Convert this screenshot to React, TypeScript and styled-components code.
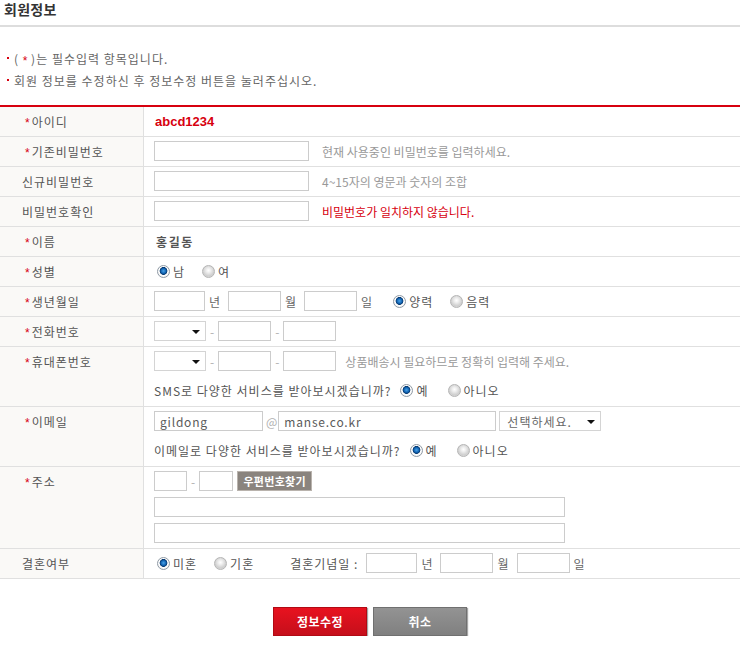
import styled, { createGlobalStyle } from 'styled-components';

const GlobalStyle = createGlobalStyle`
  body {
    margin: 0;
    background: #ffffff;
    font-family: 'Noto Sans CJK KR', 'Noto Sans', sans-serif;
    font-size: 12px;
    letter-spacing: 1px;
    color: #555555;
  }
`;

const Page = styled.div`
  width: 740px;
`;

const Title = styled.h2`
  margin: 0;
  height: 25px;
  padding-left: 4px;
  font-size: 14px;
  font-weight: 700;
  line-height: 18px;
  letter-spacing: 0.3px;
  color: #333333;
  border-bottom: 2px solid #dddddd;
`;

const Notes = styled.ul`
  margin: 0;
  padding: 20px 0 14px 0;
  list-style: none;
  border-bottom: 2px solid #d7000f;
`;

const Note = styled.li`
  display: flex;
  align-items: center;
  height: 22px;
  color: #666666;
  white-space: pre;

  &::before {
    content: '';
    width: 2px;
    height: 2px;
    margin: 0 5px 0 7px;
    background: #d7000f;
  }
`;

const Star = styled.span`
  display: inline-block;
  color: #d7000f;
  font-family: 'Liberation Sans', sans-serif;
  font-size: 12px;
  line-height: 0;
  letter-spacing: 0;
  position: relative;
  top: 3px;
`;

const Row = styled.div`
  display: flex;
  border-bottom: 1px solid #e0e0e0;
`;

const Label = styled.div<{ $star?: boolean }>`
  flex: none;
  display: flex;
  align-items: flex-start;
  box-sizing: border-box;
  width: 144px;
  padding-left: ${(p) => (p.$star ? '25px' : '22px')};
  line-height: 29px;
  background: #faf9f7;
  border-right: 1px solid #e0e0e0;
  color: #555555;

  & > ${Star} {
    line-height: 29px;
    top: 2px;
    margin-right: 2px;
  }
`;

const Value = styled.div`
  flex: 1;
  display: flex;
  flex-direction: column;
  gap: 6px;
  padding: 4px 10px 5px 10px;
`;

const Line = styled.div`
  display: flex;
  align-items: center;
  height: 20px;
  white-space: nowrap;
`;

const SubLine = styled(Line)`
  height: 22px;
  margin-top: 2px;
`;

const Input = styled.input<{ $w: number }>`
  box-sizing: border-box;
  width: ${(p) => p.$w}px;
  height: 20px;
  margin: 0;
  padding: 0 5px;
  border: 1px solid #cccccc;
  background: #ffffff;
  font-family: 'Noto Sans CJK KR', 'Noto Sans', sans-serif;
  font-size: 12px;
  letter-spacing: 0.8px;
  color: #5a5a5a;
  outline: none;
`;

const Select = styled.div<{ $w: number }>`
  box-sizing: border-box;
  display: flex;
  align-items: center;
  width: ${(p) => p.$w}px;
  height: 20px;
  padding: 0 5px 0 7px;
  border: 1px solid #d4d4d4;
  background: #ffffff;
  color: #666666;

  &::after {
    content: '';
    margin-left: auto;
    border-left: 4px solid transparent;
    border-right: 4px solid transparent;
    border-top: 4px solid #111111;
    margin-top: 1px;
  }
`;

const Sep = styled.span<{ $l?: number; $r?: number }>`
  margin: 0 ${(p) => p.$r ?? 4}px 0 ${(p) => p.$l ?? 4}px;
  letter-spacing: 0;
  color: #b0b0b0;
`;

const Unit = styled.span`
  margin: 0 7px 0 4px;
  color: #666666;
`;

const Hint = styled.span<{ $error?: boolean }>`
  margin-left: 13px;
  letter-spacing: 0;
  color: ${(p) => (p.$error ? '#d7000f' : '#999999')};
`;

const UserId = styled.span`
  margin-left: 1px;
  font-family: 'Liberation Sans', sans-serif;
  font-size: 13px;
  font-weight: 700;
  letter-spacing: 0;
  color: #d7000f;
`;

const Name = styled.span`
  margin-left: 2px;
  font-weight: 700;
  letter-spacing: 1.6px;
  color: #555555;
`;

const RadioItem = styled.label<{ $ml?: number; $mr?: number }>`
  display: inline-flex;
  align-items: center;
  margin-left: ${(p) => p.$ml ?? 0}px;
  margin-right: ${(p) => p.$mr ?? 14}px;
  color: #555555;
`;

const Dot = styled.span<{ $on?: boolean }>`
  box-sizing: border-box;
  width: 13px;
  height: 13px;
  margin: 0 3px;
  border-radius: 50%;
  border: 1px solid ${(p) => (p.$on ? '#8f9aa5' : '#b5b5b5')};
  background: ${(p) =>
    p.$on
      ? 'radial-gradient(circle at 50% 45%, #4aa3e8 0, #1265b4 2.4px, #07386e 3.6px, #ffffff 4.2px, #e6e6e6 100%)'
      : 'radial-gradient(circle at 50% 40%, #ffffff 0, #f0f0f0 2px, #cfcfcf 5.5px, #e8e8e8 100%)'};
`;

const Question = styled.span`
  margin-right: 6px;
`;

const ZipButton = styled.button`
  box-sizing: border-box;
  height: 20px;
  width: 75px;
  margin-left: 4px;
  padding: 0;
  border: 1px solid #b9b3ad;
  background: #8a847e;
  color: #ffffff;
  font-family: 'Noto Sans CJK KR', sans-serif;
  font-size: 11px;
  font-weight: 700;
  letter-spacing: 0.3px;
`;

const Anniversary = styled.span`
  margin: 0 8px 0 22px;
`;

const Buttons = styled.div`
  display: flex;
  justify-content: center;
  gap: 6px;
  padding-top: 28px;
`;

const Action = styled.button<{ $primary?: boolean }>`
  box-sizing: border-box;
  width: 94px;
  height: 29px;
  padding: 0;
  border: 1px solid ${(p) => (p.$primary ? '#b10a14' : '#707070')};
  background: ${(p) =>
    p.$primary
      ? 'linear-gradient(#e8121f, #c50f1b)'
      : 'linear-gradient(#939393, #808080)'};
  box-shadow: 1px 1px 1px rgba(0, 0, 0, 0.35);
  color: #ffffff;
  font-family: 'Noto Sans CJK KR', sans-serif;
  font-size: 12px;
  font-weight: 700;
  letter-spacing: 0.5px;
`;

type Opt = { text: string; on?: boolean };

function Radios({ items, first = 0, space }: { items: Opt[]; first?: number; space?: number }) {
  return (
    <>
      {items.map((item, i) => (
        <RadioItem key={item.text} $ml={i === 0 ? first : 0} $mr={space}>
          <Dot $on={item.on} />
          {item.text}
        </RadioItem>
      ))}
    </>
  );
}

function Req() {
  return <Star>*</Star>;
}

function App() {
  return (
    <Page>
      <GlobalStyle />
      <Title>회원정보</Title>
      <Notes>
        <Note>
          {'( '}
          <Star>*</Star>
          {' )는 필수입력 항목입니다.'}
        </Note>
        <Note>회원 정보를 수정하신 후 정보수정 버튼을 눌러주십시오.</Note>
      </Notes>

      <Row>
        <Label $star>
          <Req />
          아이디
        </Label>
        <Value>
          <Line>
            <UserId>abcd1234</UserId>
          </Line>
        </Value>
      </Row>
      <Row>
        <Label $star>
          <Req />
          기존비밀번호
        </Label>
        <Value>
          <Line>
            <Input type="password" $w={155} />
            <Hint>현재 사용중인 비밀번호를 입력하세요.</Hint>
          </Line>
        </Value>
      </Row>
      <Row>
        <Label>신규비밀번호</Label>
        <Value>
          <Line>
            <Input type="password" $w={155} />
            <Hint>4~15자의 영문과 숫자의 조합</Hint>
          </Line>
        </Value>
      </Row>
      <Row>
        <Label>비밀번호확인</Label>
        <Value>
          <Line>
            <Input type="password" $w={155} />
            <Hint $error>비밀번호가 일치하지 않습니다.</Hint>
          </Line>
        </Value>
      </Row>
      <Row>
        <Label $star>
          <Req />
          이름
        </Label>
        <Value>
          <Line>
            <Name>홍길동</Name>
          </Line>
        </Value>
      </Row>
      <Row>
        <Label $star>
          <Req />
          성별
        </Label>
        <Value>
          <Line>
            <Radios items={[{ text: '남', on: true }, { text: '여' }]} />
          </Line>
        </Value>
      </Row>
      <Row>
        <Label $star>
          <Req />
          생년월일
        </Label>
        <Value>
          <Line>
            <Input $w={51} />
            <Unit>년</Unit>
            <Input $w={53} />
            <Unit>월</Unit>
            <Input $w={53} />
            <Unit>일</Unit>
            <Radios first={10} items={[{ text: '양력', on: true }, { text: '음력' }]} />
          </Line>
        </Value>
      </Row>
      <Row>
        <Label $star>
          <Req />
          전화번호
        </Label>
        <Value>
          <Line>
            <Select $w={52} />
            <Sep>-</Sep>
            <Input $w={53} />
            <Sep>-</Sep>
            <Input $w={53} />
          </Line>
        </Value>
      </Row>
      <Row>
        <Label $star>
          <Req />
          휴대폰번호
        </Label>
        <Value>
          <Line>
            <Select $w={52} />
            <Sep>-</Sep>
            <Input $w={53} />
            <Sep>-</Sep>
            <Input $w={53} />
            <Hint style={{ marginLeft: 9 }}>상품배송시 필요하므로 정확히 입력해 주세요.</Hint>
          </Line>
          <SubLine>
            <Question>SMS로 다양한 서비스를 받아보시겠습니까?</Question>
            <Radios space={16} items={[{ text: '예', on: true }, { text: '아니오' }]} />
          </SubLine>
        </Value>
      </Row>
      <Row>
        <Label $star>
          <Req />
          이메일
        </Label>
        <Value>
          <Line>
            <Input $w={109} defaultValue="gildong" />
            <Sep $l={3} $r={1}>@</Sep>
            <Input $w={218} defaultValue="manse.co.kr" />
            <Select $w={102} style={{ marginLeft: 3 }}>
              선택하세요.
            </Select>
          </Line>
          <SubLine>
            <Question>이메일로 다양한 서비스를 받아보시겠습니까?</Question>
            <Radios space={16} items={[{ text: '예', on: true }, { text: '아니오' }]} />
          </SubLine>
        </Value>
      </Row>
      <Row>
        <Label $star>
          <Req />
          주소
        </Label>
        <Value>
          <Line>
            <Input $w={33} />
            <Sep>-</Sep>
            <Input $w={34} />
            <ZipButton type="button">우편번호찾기</ZipButton>
          </Line>
          <Line>
            <Input $w={411} />
          </Line>
          <Line>
            <Input $w={411} />
          </Line>
        </Value>
      </Row>
      <Row>
        <Label>결혼여부</Label>
        <Value>
          <Line>
            <Radios items={[{ text: '미혼', on: true }, { text: '기혼' }]} />
            <Anniversary>결혼기념일 :</Anniversary>
            <Input $w={51} />
            <Unit>년</Unit>
            <Input $w={53} />
            <Unit>월</Unit>
            <Input $w={53} />
            <Unit>일</Unit>
          </Line>
        </Value>
      </Row>

      <Buttons>
        <Action type="button" $primary>
          정보수정
        </Action>
        <Action type="button">취소</Action>
      </Buttons>
    </Page>
  );
}

export default App;
